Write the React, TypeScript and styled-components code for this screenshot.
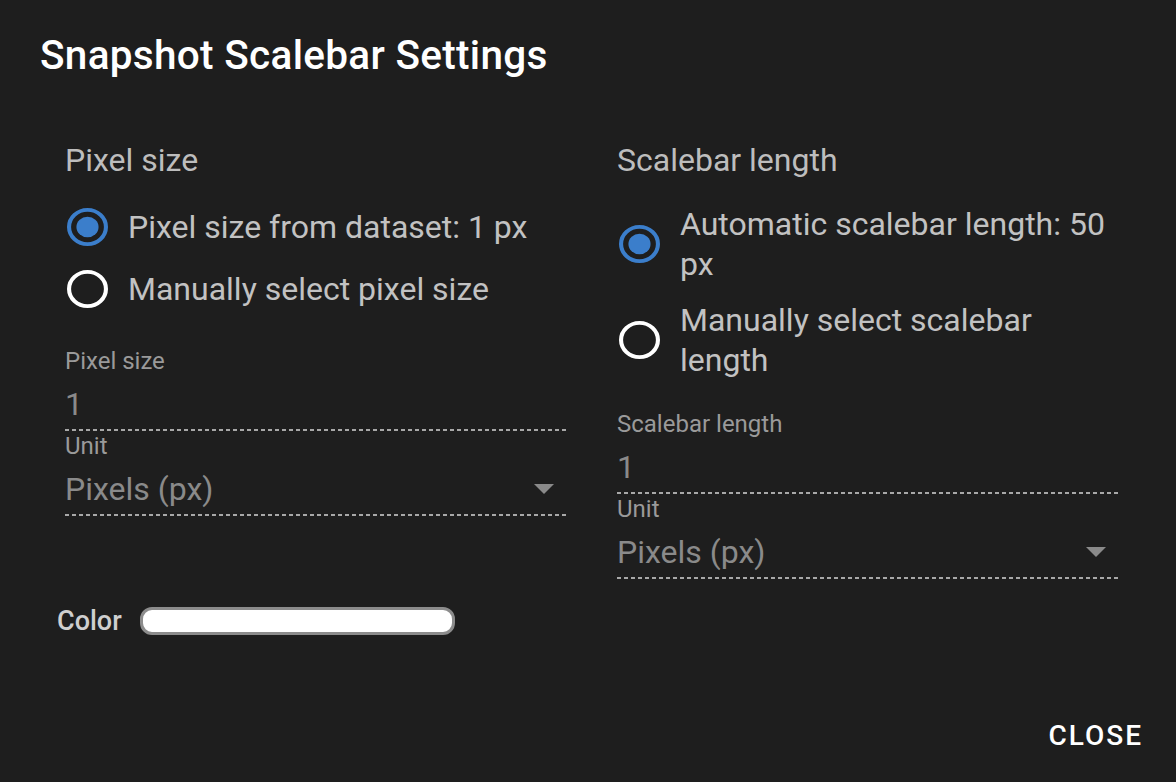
import React from "react";
import styled, { createGlobalStyle } from "styled-components";

const GlobalStyle = createGlobalStyle`
  html, body {
    margin: 0;
    padding: 0;
    background: #1e1e1e;
    font-family: Roboto, "Liberation Sans", Arial, sans-serif;
  }
  * { box-sizing: border-box; }
`;

const Dialog = styled.div`
  width: 1176px;
  height: 782px;
  background: #1e1e1e;
  display: flex;
  flex-direction: column;
  overflow: hidden;
`;

const Title = styled.h2`
  margin: 0;
  padding: 31px 0 0 40px;
  font-size: 40.5px;
  line-height: 48px;
  font-weight: 500;
  color: #ffffff;
  letter-spacing: 0.3px;
`;

const Content = styled.div`
  display: grid;
  grid-template-columns: 503px 503px;
  column-gap: 49px;
  align-items: start;
  padding: 61px 0 0 65px;
`;

const Column = styled.section`
  display: flex;
  flex-direction: column;
`;

const Heading = styled.div`
  font-size: 32px;
  line-height: 40px;
  color: #bdbdbd;
  margin-bottom: 16px;
`;

const RadioGroup = styled.div`
  display: flex;
  flex-direction: column;
`;

const RadioRow = styled.label`
  display: flex;
  align-items: center;
  min-height: 62px;
  padding: 8px 0;
`;

const RadioIcon = styled.svg`
  flex: none;
  width: 41px;
  height: 38px;
  margin-left: 2px;
  margin-right: 20px;
`;

const RadioLabel = styled.span`
  flex: 1;
  font-size: 32px;
  line-height: 40px;
  color: #c2c2c2;
`;

const Field = styled.div`
  display: flex;
  flex-direction: column;
`;

const Fields = styled.div<{ $top: number }>`
  display: flex;
  flex-direction: column;
  margin-top: ${(p) => p.$top}px;
`;

const FieldLabel = styled.div`
  font-size: 24px;
  line-height: 30px;
  color: #9a9a9a;
  margin-bottom: 8px;
`;

const FieldValue = styled.div`
  display: flex;
  align-items: center;
  justify-content: space-between;
  font-size: 32px;
  line-height: 40px;
  color: #8a8a8a;
  padding-bottom: 5px;
`;

const Underline = styled.div`
  height: 2px;
  background-image: repeating-linear-gradient(
    to right,
    #a8a8a8 0 4px,
    transparent 4px 7px
  );
`;

const Arrow = styled.svg`
  width: 20px;
  height: 10px;
  margin-right: 14px;
`;

const ColorRow = styled.div`
  display: flex;
  align-items: center;
  margin: 91px 0 0 -8px;
`;

const ColorLabel = styled.span`
  font-size: 27px;
  line-height: 28px;
  font-weight: 500;
  color: #cfcfcf;
  margin-right: 18px;
`;

const Swatch = styled.div<{ $color: string }>`
  width: 315px;
  height: 28px;
  border: 3px solid #8c8c8c;
  border-radius: 12px;
  background: ${(p) => p.$color};
`;

const Actions = styled.div`
  margin-top: auto;
  display: flex;
  justify-content: flex-end;
  padding: 0 17px 10px 0;
`;

const Button = styled.button`
  background: transparent;
  border: none;
  padding: 12px 16px;
  font-family: Roboto, "Liberation Sans", Arial, sans-serif;
  font-size: 28px;
  line-height: 49px;
  font-weight: 500;
  letter-spacing: 2px;
  text-transform: uppercase;
  color: #ffffff;
  cursor: pointer;
`;

function Radio({ checked }: { checked: boolean }) {
  const color = checked ? "#3b7ecb" : "#ffffff";
  return (
    <RadioIcon viewBox="2 2 20 20" preserveAspectRatio="none">
      <circle cx="12" cy="12" r="9" fill="none" stroke={color} strokeWidth="2" />
      {checked && <circle cx="12" cy="12" r="5.4" fill={color} />}
    </RadioIcon>
  );
}

function Option({ checked, children }: { checked: boolean; children: React.ReactNode }) {
  return (
    <RadioRow>
      <Radio checked={checked} />
      <RadioLabel>{children}</RadioLabel>
    </RadioRow>
  );
}

function TextField({ label, value, select }: { label: string; value: string; select?: boolean }) {
  return (
    <Field>
      <FieldLabel>{label}</FieldLabel>
      <FieldValue>
        <span>{value}</span>
        {select && (
          <Arrow viewBox="0 0 20 10">
            <polygon points="0,0 20,0 10,10" fill="#8a8a8a" />
          </Arrow>
        )}
      </FieldValue>
      <Underline />
    </Field>
  );
}

export default function App() {
  return (
    <>
      <GlobalStyle />
      <Dialog>
        <Title>Snapshot Scalebar Settings</Title>
        <Content>
          <Column>
            <Heading>Pixel size</Heading>
            <RadioGroup>
              <Option checked>Pixel size from dataset: 1 px</Option>
              <Option checked={false}>Manually select pixel size</Option>
            </RadioGroup>
            <Fields $top={26}>
              <TextField label="Pixel size" value="1" />
              <TextField label="Unit" value="Pixels (px)" select />
            </Fields>
            <ColorRow>
              <ColorLabel>Color</ColorLabel>
              <Swatch $color="#ffffff" />
            </ColorRow>
          </Column>
          <Column>
            <Heading>Scalebar length</Heading>
            <RadioGroup>
              <Option checked>Automatic scalebar length: 50 px</Option>
              <Option checked={false}>Manually select scalebar length</Option>
            </RadioGroup>
            <Fields $top={21}>
              <TextField label="Scalebar length" value="1" />
              <TextField label="Unit" value="Pixels (px)" select />
            </Fields>
          </Column>
        </Content>
        <Actions>
          <Button>Close</Button>
        </Actions>
      </Dialog>
    </>
  );
}
